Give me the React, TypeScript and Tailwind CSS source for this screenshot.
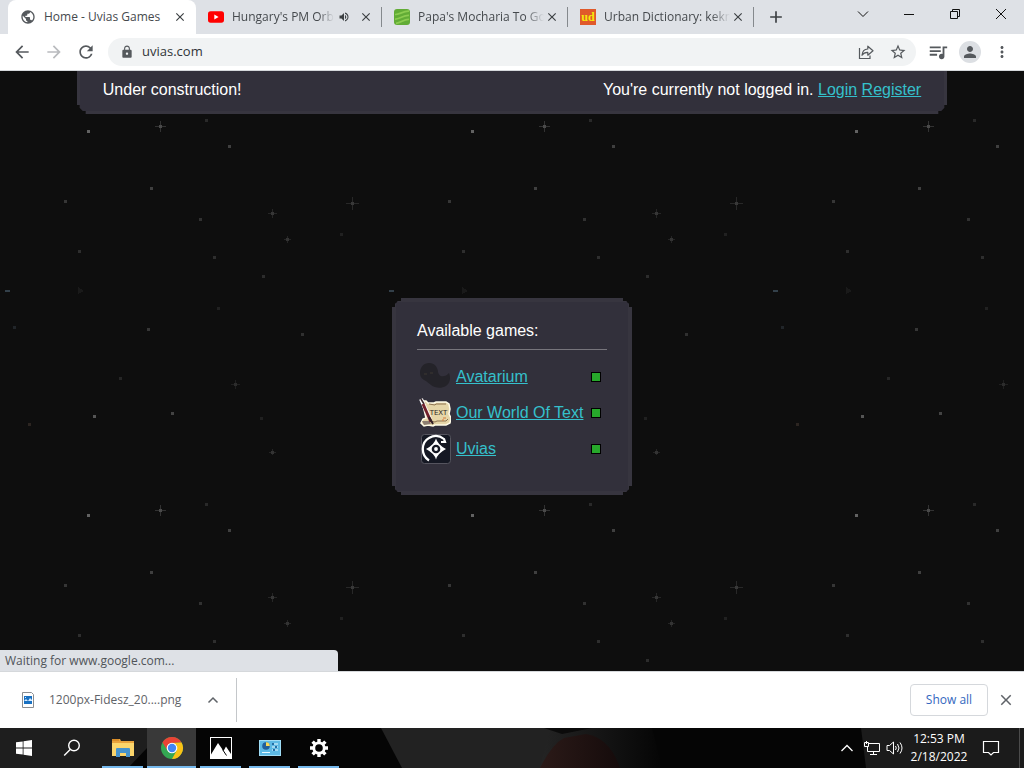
import type { ReactNode } from "react";
import {
  MdArrowBack,
  MdArrowForward,
  MdClose,
  MdAdd,
  MdLock,
  MdMoreVert,
  MdOutlineStarBorder,
  MdPerson,
  MdPublic,
  MdQueueMusic,
  MdRefresh,
  MdVolumeUp,
} from "react-icons/md";

const YoutubeIcon = () => (
  <svg viewBox="0 0 16 16" className="size-4">
    <rect y="2.3" width="16" height="11.4" rx="2.6" fill="#f00" />
    <path d="M6.3 5.4 10.6 8l-4.3 2.6z" fill="#fff" />
  </svg>
);

const MochariaIcon = () => (
  <svg viewBox="0 0 16 16" className="size-4">
    <rect width="16" height="16" rx="3" fill="#62ac36" />
    <path d="M1 5.5C5 5.8 9 2 15 2.2M1 10C6 10.5 9 6 15 6.4M2 14.3C7 14 10 10 15 10.5" fill="none" stroke="#8ccc50" strokeWidth="1.7" />
  </svg>
);

const UrbanIcon = () => (
  <svg viewBox="0 0 16 16" className="size-4">
    <rect width="16" height="16" fill="#e0592a" />
    <text x="8" y="11.5" textAnchor="middle" fontSize="12" fontWeight="700" fontFamily="Liberation Serif, serif" fill="#f5e80c">
      ud
    </text>
  </svg>
);

interface TabProps {
  icon: ReactNode;
  title: string;
  active?: boolean;
  audio?: boolean;
}

const Tab = ({ icon, title, active, audio }: TabProps) => (
  <div
    className={
      active
        ? "flex w-[188px] min-w-0 items-center rounded-t-lg bg-white pr-2 pl-3"
        : "flex w-[186px] min-w-0 items-center pr-2 pl-3"
    }
  >
    <span className="shrink-0">{icon}</span>
    <span
      className={
        active
          ? "ml-2 min-w-0 flex-1 overflow-hidden text-xs whitespace-nowrap text-[#45494d]"
          : "ml-2 min-w-0 flex-1 overflow-hidden mask-r-from-85% text-xs whitespace-nowrap text-[#45494d]"
      }
    >
      {title}
    </span>
    {audio && <MdVolumeUp className="mr-2 ml-1 size-3 shrink-0 text-[#3c4043]" />}
    <button aria-label={`Close ${title}`} className="flex size-4 shrink-0 items-center justify-center text-[#3c4043]">
      <MdClose className="size-[14px]" />
    </button>
  </div>
);

const Divider = () => <div className="-ml-px h-5 w-px shrink-0 self-center bg-[#85898d]" />;

const TabStrip = () => (
  <header className="flex h-[34px] shrink-0 items-stretch bg-[#dee1e6] pl-2">
    <Tab active icon={<MdPublic className="size-4 text-[#55595d]" />} title="Home - Uvias Games" />
    <Tab audio icon={<YoutubeIcon />} title="Hungary's PM Orb" />
    <Divider />
    <Tab icon={<MochariaIcon />} title="Papa's Mocharia To Go" />
    <Divider />
    <Tab icon={<UrbanIcon />} title="Urban Dictionary: kekm" />
    <Divider />
    <button aria-label="New tab" className="ml-3 flex w-5 shrink-0 items-center justify-center text-[#3c4043]">
      <MdAdd className="size-5" />
    </button>
    <div className="ml-auto flex h-7 shrink-0 text-[#111]">
      <button aria-label="Search tabs" className="flex w-[46px] items-center justify-center">
        <svg viewBox="0 0 12 12" className="size-3" fill="none" stroke="currentColor">
          <path d="m1 3.500 5 5 5-5" />
        </svg>
      </button>
      <button aria-label="Minimize" className="flex w-[46px] items-center justify-center">
        <svg viewBox="0 0 12 12" className="size-3" stroke="currentColor">
          <path d="M1 6.500h10" />
        </svg>
      </button>
      <button aria-label="Restore" className="flex w-[46px] items-center justify-center">
        <svg viewBox="0 0 12 12" className="size-3" fill="none" stroke="currentColor">
          <path d="M1.500 3.500h7v7h-7zM3.500 3.500v-2h7v7h-2" />
        </svg>
      </button>
      <button aria-label="Close window" className="flex w-[46px] items-center justify-center">
        <svg viewBox="0 0 12 12" className="size-3" stroke="currentColor">
          <path d="m1 1 10 10M11 1 1 11" />
        </svg>
      </button>
    </div>
  </header>
);

const Toolbar = () => (
  <nav className="flex h-[37px] shrink-0 items-center border-b border-[#d5d8db] bg-white pr-1.5 pl-1.5 text-[#55595d]">
    <button aria-label="Back" className="flex w-8 justify-center">
      <MdArrowBack className="size-5" />
    </button>
    <button aria-label="Forward" className="flex w-8 justify-center text-[#b9bbbe]">
      <MdArrowForward className="size-5" />
    </button>
    <button aria-label="Reload" className="flex w-8 justify-center">
      <MdRefresh className="size-5" />
    </button>
    <div className="ml-1.5 flex h-7 flex-1 items-center rounded-full bg-[#f1f3f4] pr-0.5 pl-3">
      <MdLock className="size-3.5 shrink-0" />
      <input
        aria-label="Address"
        defaultValue="uvias.com"
        className="ml-2 min-w-0 flex-1 bg-transparent text-[13px] text-[#303438] outline-none"
      />
      <button aria-label="Share this page" className="flex w-8 justify-center">
        <svg viewBox="0 0 16 16" className="size-4" fill="none" stroke="currentColor" strokeWidth="1.200">
          <path d="M1.500 4v10.500h10.500V11.500" />
          <path d="M4 11.300C4.300 7.500 6 5.200 9.800 5V2.200L15 6.800l-5.200 4.400V8.400C7 8.300 5.300 9.200 4 11.300z" strokeLinejoin="round" />
        </svg>
      </button>
      <button aria-label="Bookmark" className="flex w-8 justify-center">
        <MdOutlineStarBorder className="size-[18px]" />
      </button>
    </div>
    <button aria-label="Media controls" className="ml-1.5 flex w-8 justify-center">
      <MdQueueMusic className="size-[22px]" />
    </button>
    <button aria-label="Profile" className="flex w-8 justify-center">
      <span className="flex size-[22px] items-center justify-center rounded-full bg-[#dcdfe3]">
        <MdPerson className="size-[18px]" />
      </span>
    </button>
    <button aria-label="Menu" className="flex w-8 justify-center">
      <MdMoreVert className="size-[18px]" />
    </button>
  </nav>
);

const dots: [number, number, string][] = [
  [88, 60, "#777"],
  [229, 75, "#4b4b4b"],
  [151, 117, "#4b4b4b"],
  [65, 130, "#404040"],
  [200, 148, "#3a3a3a"],
  [79, 180, "#363636"],
  [214, 186, "#363636"],
  [263, 205, "#333"],
  [206, 49, "#303030"],
  [341, 163, "#252525"],
  [14, 256, "#262a30"],
  [148, 258, "#404040"],
  [302, 263, "#383838"],
  [218, 237, "#262626"],
  [120, 307, "#2c2c2c"],
  [94, 345, "#666"],
  [172, 342, "#505050"],
  [29, 353, "#332a26"],
  [261, 347, "#242424"],
];

const crosses: [number, number, number, string][] = [
  [160, 55, 5, "#4a4a4a"],
  [352, 132, 6, "#383838"],
  [272, 142, 4, "#363636"],
  [287, 168, 3, "#333"],
  [235, 313, 4, "#2c2c2c"],
  [272, 381, 3, "#333"],
];

const Starfield = () => (
  <svg aria-hidden="true" className="absolute inset-0 -z-10 size-full" shapeRendering="crispEdges">
    <defs>
      <pattern id="stars" width="384" height="384" patternUnits="userSpaceOnUse">
        <rect width="384" height="384" fill="#0e0e0e" />
        {dots.map(([x, y, fill]) => (
          <rect key={`${x}-${y}`} x={x - 1} y={y - 1} width="3" height="3" fill={fill} opacity="0.8" />
        ))}
        {crosses.map(([x, y, r, fill]) => (
          <g key={`${x}-${y}`} fill={fill}>
            <rect x={x - r} y={y} width={r * 2 + 1} height="1" opacity="0.6" />
            <rect x={x} y={y - r} width="1" height={r * 2 + 1} opacity="0.6" />
            <rect x={x - 1} y={y - 1} width="3" height="3" />
          </g>
        ))}
        <rect x="5" y="219" width="5" height="2" fill="#33404a" />
        <path d="M78 216v7l6-3z" fill="#1a1a1a" />
      </pattern>
    </defs>
    <rect width="100%" height="100%" fill="url(#stars)" />
  </svg>
);

const AvatariumIcon = () => (
  <svg viewBox="0 0 32 32" className="size-8">
    <path d="M1 12c0-6 4-10 9-10 6 0 8 4 9 8 0 4 3 6 6 5 2 0 3-1 5-3 2 5 1 10-3 13-5 3-11 2-15-1-3-2-4-4-7-5-3-2-4-4-4-7z" fill="#242329" />
    <path d="M5 13h3m3-1h3" stroke="#3d3932" />
  </svg>
);

const ScrollIcon = () => (
  <svg viewBox="0 0 32 32" className="size-8">
    <path
      d="M3 4h4l2 2h6l2-1h10l3 2 1 5-1 5 2 4-1 5-4 2H16l-2 1-5-1-4 1-3-3 2-4 3-1z"
      fill="#e6d6a8"
      stroke="#fffbe8"
      strokeWidth="1.500"
    />
    <path d="m10 7 6 1 1-1h10M11 24l5 1 2-1h9l2-2" fill="none" stroke="#8d7350" />
    <path d="M3 24h7l2 3-7 1z" fill="#8d7f72" />
    <path d="m2 2 9 20" stroke="#fff" strokeWidth="4" />
    <path d="m2 2 3 5" stroke="#3b292c" strokeWidth="1.500" />
    <path d="m4 7 8 18" stroke="#71202a" strokeWidth="3" />
    <path d="m10 20 4 7" stroke="#312026" strokeWidth="2" />
    <path d="M24 21h3m-4 2h2" stroke="#d77d38" />
    <text x="19.500" y="17.500" textAnchor="middle" fontSize="7" fontFamily="DejaVu Sans, sans-serif" fill="#302924">
      TEXT
    </text>
  </svg>
);

const UviasIcon = () => (
  <svg viewBox="0 0 32 32" className="size-8" fill="none">
    <rect x="2.500" y="1.500" width="29" height="29" rx="3" fill="#151823" stroke="#55545e" />
    <path d="M10 27.500C1.500 22 2 9.500 10 5c5-3 10-3 15 1l1 3h-4" stroke="#fff" strokeWidth="2.200" />
    <path d="M17 5.500q1.500 6 10 10.500-8.500 4.500-10 10.500-1.500-6-10-10.500 8.500-4.500 10-10.500z" fill="#fff" />
    <circle cx="17" cy="16" r="4.300" fill="#151823" />
    <circle cx="17" cy="16" r="1.900" fill="#fff" />
  </svg>
);

const games = [
  { name: "Avatarium", icon: <AvatariumIcon /> },
  { name: "Our World Of Text", icon: <ScrollIcon /> },
  { name: "Uvias", icon: <UviasIcon /> },
];

const Page = () => (
  <main className="relative isolate flex min-h-0 flex-1 flex-col items-center overflow-hidden bg-[#0e0e0e] font-['Liberation_Sans',sans-serif] text-base leading-[18px] text-white">
    <Starfield />
    <section className="flex w-[85%] justify-between border-x-3 border-b-3 border-[#37353f] bg-[#32303b] px-[23px] pt-2.5 pb-3 [clip-path:polygon(0_0,100%_0,100%_calc(100%-9px),calc(100%-3px)_calc(100%-9px),calc(100%-3px)_calc(100%-6px),calc(100%-6px)_calc(100%-3px),calc(100%-9px)_calc(100%-3px),calc(100%-9px)_100%,9px_100%,9px_calc(100%-3px),6px_calc(100%-3px),3px_calc(100%-6px),3px_calc(100%-9px),0_calc(100%-9px))]">
      <span>Under construction!</span>
      <span>
        You're currently not logged in.{" "}
        <a href="#login" className="text-[#35c0cc] underline">Login</a>{" "}
        <a href="#register" className="text-[#35c0cc] underline">Register</a>
      </span>
    </section>
    <div className="flex w-full flex-1 items-center justify-center pt-2">
      <section className="w-60 border-4 border-[#37353f] bg-[#32303b] px-[21px] pt-5 pb-6 [clip-path:polygon(9px_0,calc(100%-9px)_0,calc(100%-9px)_3px,calc(100%-6px)_3px,calc(100%-3px)_6px,calc(100%-3px)_9px,100%_9px,100%_calc(100%-9px),calc(100%-3px)_calc(100%-9px),calc(100%-3px)_calc(100%-6px),calc(100%-6px)_calc(100%-3px),calc(100%-9px)_calc(100%-3px),calc(100%-9px)_100%,9px_100%,9px_calc(100%-3px),6px_calc(100%-3px),3px_calc(100%-6px),3px_calc(100%-9px),0_calc(100%-9px),0_9px,3px_9px,3px_6px,6px_3px,9px_3px)]">
        <h1>Available games:</h1>
        <hr className="my-[9px] border-[#77757c]" />
        <ul>
          {games.map((game) => (
            <li key={game.name} className="flex h-9 items-center pr-1.5 pl-0.5">
              {game.icon}
              <a href={`#${game.name}`} className="ml-[5px] whitespace-nowrap text-[#35c0cc] underline">
                {game.name}
              </a>
              <span className="ml-auto size-2.5 shrink-0 border border-black bg-[#27a82b]" />
            </li>
          ))}
        </ul>
      </section>
    </div>
    <div className="absolute bottom-0 left-0 h-[21px] w-[33%] rounded-tr-sm bg-[#dee1e6] pl-[5px] text-xs leading-[22px] text-[#505459] font-['Open_Sans',sans-serif]">
      Waiting for www.google.com...
    </div>
  </main>
);

const DownloadShelf = () => (
  <section className="flex h-[57px] shrink-0 items-center border-t border-[#d5d8db] bg-white pr-2 text-[#5f6368]">
    <div className="flex h-11 w-[237px] shrink-0 items-center border-r border-[#c4c7ca] pl-5">
      <svg viewBox="0 0 16 16" className="size-4 shrink-0">
        <path d="M2.500.5h9l2 2v13h-11z" fill="#fff" stroke="#8a8d91" />
        <path d="M4 4h8v8H4z" fill="#1971c2" />
        <path d="m4 9 2-2 2 2 2-3 2 2v1H4zM5 5h1v1H5z" fill="#d8ecff" />
      </svg>
      <span className="ml-[13px] min-w-0 flex-1 text-xs whitespace-nowrap">1200px-Fidesz_20....png</span>
      <button aria-label="Download options" className="flex w-[46px] shrink-0 justify-center">
        <svg viewBox="0 0 12 12" className="size-3" fill="none" stroke="currentColor" strokeWidth="1.500">
          <path d="m1.500 8.500 4.500-4.500 4.500 4.500" />
        </svg>
      </button>
    </div>
    <button className="ml-auto h-8 w-[78px] rounded border border-[#d5d8dc] text-xs font-medium text-[#3367c0]">Show all</button>
    <button aria-label="Close downloads" className="ml-2 flex size-5 items-center justify-center">
      <MdClose className="size-[18px]" />
    </button>
  </section>
);

const WindowsIcon = () => (
  <svg viewBox="0 0 16 16" className="size-4" fill="#fff">
    <path d="M0 2.300 6.700 1.400v6.200H0zM7.500 1.300 16 .1v7.500H7.500zM0 8.400h6.700v6.200L0 13.700zM7.500 8.400H16v7.500l-8.500-1.200z" />
  </svg>
);

const SearchIcon = () => (
  <svg viewBox="0 0 18 18" className="size-[18px]" fill="none" stroke="#fff" strokeWidth="1.400">
    <circle cx="11" cy="6.500" r="5.300" />
    <path d="m7.200 10.400-6 6" />
  </svg>
);

const FolderIcon = () => (
  <svg viewBox="0 0 22 20" className="h-5 w-[22px]">
    <path d="M0 1h8l1 2h13v15H0z" fill="#e8a33d" />
    <path d="M0 5h22v13H0z" fill="#fbd56b" />
    <path d="M0 1h7v2H0z" fill="#d98d28" />
    <path d="M4 11q0-1 1-1h12q1 0 1 1v8h-4v-4H8v4H4z" fill="#4693cd" />
  </svg>
);

const ChromeIcon = () => (
  <svg viewBox="0 0 24 24" className="size-6">
    <circle cx="12" cy="12" r="11" fill="#34a853" />
    <path d="M2.470 6.500A11 11 0 0 1 21.530 6.500L12 6.900 7.500 14.500z" fill="#ea4335" />
    <path d="M21.530 6.500A11 11 0 0 1 12 23L16.500 14.800 16.700 9 12 6.900z" fill="#fbc116" />
    <circle cx="12" cy="12" r="5.300" fill="#fff" />
    <circle cx="12" cy="12" r="4.200" fill="#4285f4" />
  </svg>
);

const PhotosIcon = () => (
  <svg viewBox="0 0 22 22" className="size-[22px]">
    <rect x=".5" y=".5" width="21" height="21" fill="#050505" stroke="#fff" />
    <path d="M1 17.500 8 6l5.500 8L16 9.500l5 7.500v4H1z" fill="#fff" />
    <path d="m12.500 12.500 4 6" stroke="#050505" />
  </svg>
);

const ControlPanelIcon = () => (
  <svg viewBox="0 0 22 18" className="h-[18px] w-[22px]">
    <rect x=".5" y="1.500" width="21" height="15" fill="#5db9e4" stroke="#9fdcf5" />
    <circle cx="7" cy="7" r="3.800" fill="#215f9b" />
    <path d="M7 7V3.200A3.800 3.800 0 0 1 10.800 7z" fill="#f8d958" />
    <path d="M13 5h6M13 8h6M13 11h6M3 13.500h8" stroke="#e8faff" />
    <path d="M14 4v2m3 1v2m-2 1v2" stroke="#256da4" strokeWidth="2" />
  </svg>
);

const GearIcon = () => (
  <svg viewBox="0 0 20 20" className="size-5" fill="none" stroke="#fff">
    <circle cx="10" cy="10" r="5.200" strokeWidth="2.800" />
    <g strokeWidth="3.400">
      <path d="M10 1v3M10 16v3M1 10h3M16 10h3" />
      <path d="m3.600 3.600 2.200 2.200M14.200 14.200l2.200 2.200M3.600 16.400l2.200-2.200M14.200 5.800l2.200-2.200" />
    </g>
  </svg>
);

const TaskbarBackdrop = () => (
  <svg aria-hidden="true" viewBox="0 0 1024 40" preserveAspectRatio="none" className="absolute inset-0 -z-10 size-full">
    <defs>
      <linearGradient id="coat" x1="0" x2="1">
        <stop offset="0" stopColor="#242424" />
        <stop offset="1" stopColor="#050505" />
      </linearGradient>
      <linearGradient id="face" x1="0" x2="1">
        <stop offset="0" stopColor="#2b1a18" />
        <stop offset="1" stopColor="#150b0b" />
      </linearGradient>
    </defs>
    <rect width="1024" height="40" fill="#050505" />
    <path d="M0 0h166l-38 40H0z" fill="#1e1e1e" />
    <path d="M381 0h171l-10 40H402z" fill="#222" />
    <path d="M550 0h102l10 40H540z" fill="url(#coat)" />
    <path d="M544 0h48l-30 6z" fill="#0b0b0b" />
    <path d="M540 40q12-24 24-30l22-4q24 4 34 34z" fill="url(#face)" />
    <path d="M861 0h163v40H866z" fill="#1b1b1b" />
  </svg>
);

const apps = [
  { name: "File Explorer", icon: <FolderIcon /> },
  { name: "Google Chrome", icon: <ChromeIcon />, active: true },
  { name: "Photos", icon: <PhotosIcon /> },
  { name: "Control Panel", icon: <ControlPanelIcon /> },
  { name: "Settings", icon: <GearIcon /> },
];

const Taskbar = () => (
  <footer className="relative isolate flex h-10 shrink-0 items-stretch text-white">
    <TaskbarBackdrop />
    <button aria-label="Start" className="flex w-12 items-center justify-center">
      <WindowsIcon />
    </button>
    <button aria-label="Search" className="mr-0.5 flex w-12 items-center justify-center">
      <SearchIcon />
    </button>
    {apps.map((app) => (
      <button
        key={app.name}
        aria-label={app.name}
        className={
          app.active
            ? "flex w-[49px] flex-col items-center bg-[#393939]"
            : "flex w-[49px] flex-col items-center px-1"
        }
      >
        <span className="flex flex-1 items-center pt-0.5">{app.icon}</span>
        <span className="h-0.5 w-full bg-[#76b9ed]" />
      </button>
    ))}
    <div className="ml-auto flex items-center">
      <button aria-label="Show hidden icons" className="flex w-6 justify-center">
        <svg viewBox="0 0 14 14" className="size-3.5" fill="none" stroke="#fff" strokeWidth="1.300">
          <path d="m1.500 10 5.500-5.500 5.500 5.500" />
        </svg>
      </button>
      <button aria-label="Network" className="flex w-6 justify-center">
        <svg viewBox="0 0 17 16" className="h-4 w-[17px]" fill="none" stroke="#fff">
          <path d="M6 3.500h10.500v8H4.500V7M10.500 11.500v3M7 14.500h7M1.500 2.500h4v4h-4zM3.500 1v3" />
        </svg>
      </button>
      <button aria-label="Volume" className="flex w-6 justify-center">
        <svg viewBox="0 0 18 16" className="h-4 w-[18px]" fill="none" stroke="#fff">
          <path d="M1 5.500h2.500L7.500 2v12l-4-3.500H1z" />
          <path d="M9.500 6q1.500 2 0 4M11.500 4q3 4 0 8M14 2.500q4 5.500 0 11" />
        </svg>
      </button>
      <time className="w-16 text-center text-xs leading-[18px]">
        12:53 PM
        <br />
        2/18/2022
      </time>
      <button aria-label="Notifications" className="flex w-10 justify-center">
        <svg viewBox="0 0 18 18" className="size-[18px]" fill="none" stroke="#fff" strokeWidth="1.200">
          <path d="M1.500 2.500h15v11h-5L9 16l-2.500-2.500h-5z" />
        </svg>
      </button>
      <div className="mr-1 ml-2 h-10 w-px bg-[#4b4b4b]" />
    </div>
  </footer>
);

export default function App() {
  return (
    <div className="flex h-screen flex-col overflow-hidden font-['Open_Sans',sans-serif]">
      <TabStrip />
      <Toolbar />
      <Page />
      <DownloadShelf />
      <Taskbar />
    </div>
  );
}
